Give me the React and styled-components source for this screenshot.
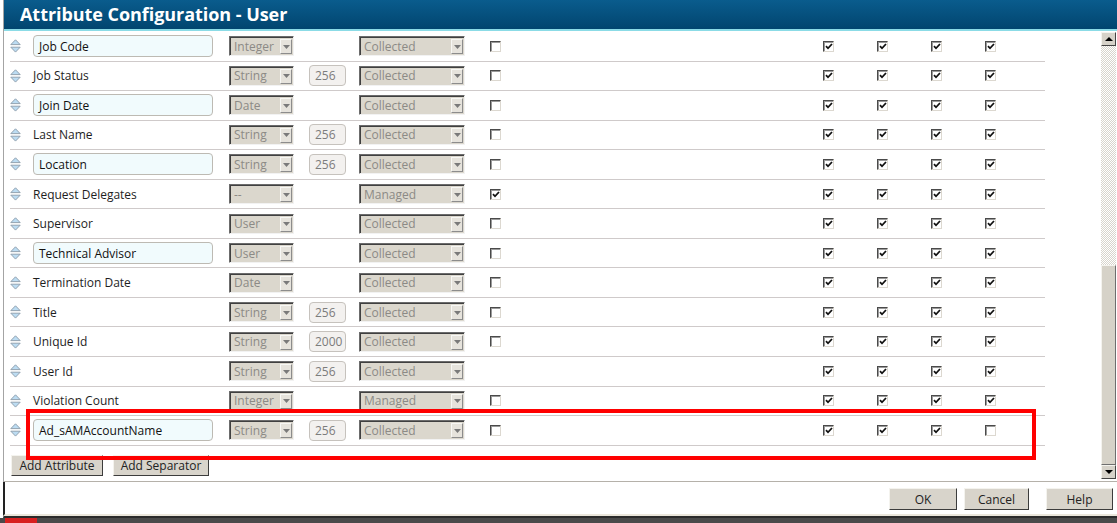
import React from "react";
import styled, { createGlobalStyle } from "styled-components";

const GlobalStyle = createGlobalStyle`
  html, body {
    margin: 0;
    padding: 0;
    background: #ffffff;
  }
  body {
    font-family: "Open Sans", "DejaVu Sans", sans-serif;
    font-size: 12px;
    color: #222;
  }
  * {
    box-sizing: border-box;
  }
`;

const rows = [
  { name: "Job Code", edit: true, type: "Integer", source: "Collected", flag: false },
  { name: "Job Status", type: "String", len: "256", source: "Collected", flag: false },
  { name: "Join Date", edit: true, type: "Date", source: "Collected", flag: false },
  { name: "Last Name", type: "String", len: "256", source: "Collected", flag: false },
  { name: "Location", edit: true, type: "String", len: "256", source: "Collected", flag: false },
  { name: "Request Delegates", type: "--", source: "Managed", flag: true },
  { name: "Supervisor", type: "User", source: "Collected", flag: false },
  { name: "Technical Advisor", edit: true, type: "User", source: "Collected", flag: false },
  { name: "Termination Date", type: "Date", source: "Collected", flag: false },
  { name: "Title", type: "String", len: "256", source: "Collected", flag: false },
  { name: "Unique Id", type: "String", len: "2000", source: "Collected", flag: false },
  { name: "User Id", type: "String", len: "256", source: "Collected", flag: null },
  { name: "Violation Count", type: "Integer", source: "Managed", flag: false },
  {
    name: "Ad_sAMAccountName",
    edit: true,
    type: "String",
    len: "256",
    source: "Collected",
    flag: false,
    perms: [true, true, true, false],
  },
];

const App = () => {
  return (
    <>
      <GlobalStyle />
      <Page>
        <Dialog>
          <TitleBar>Attribute Configuration - User</TitleBar>
          <Body>
            <ScrollPane>
              {rows.map((r) => (
                <Row key={r.name}>
                  <Cell $w={23}>
                    <SortIcon />
                  </Cell>
                  <Cell $w={196}>
                    {r.edit ? <NameInput>{r.name}</NameInput> : <NameLabel>{r.name}</NameLabel>}
                  </Cell>
                  <Cell $w={80}>
                    <Select $w={65}>{r.type}</Select>
                  </Cell>
                  <Cell $w={50}>{r.len && <LengthBox>{r.len}</LengthBox>}</Cell>
                  <Cell $w={131}>
                    <Select $w={106}>{r.source}</Select>
                  </Cell>
                  <Cell $w={333}>{r.flag !== null && <Check checked={r.flag} />}</Cell>
                  {(r.perms || [true, true, true, true]).map((p, i) => (
                    <Cell $w={54} key={i}>
                      <Check checked={p} />
                    </Cell>
                  ))}
                </Row>
              ))}
              <ActionBar>
                <Button $w={92}>Add Attribute</Button>
                <Button $w={96}>Add Separator</Button>
              </ActionBar>
            </ScrollPane>
            <Scrollbar>
              <ScrollButton>
                <Arrow $up />
              </ScrollButton>
              <Track>
                <Thumb />
              </Track>
              <ScrollButton>
                <Arrow />
              </ScrollButton>
            </Scrollbar>
          </Body>
          <Footer>
            <Button $w={68} $h={22}>OK</Button>
            <Button $w={65} $h={22}>Cancel</Button>
            <Button $w={67} $h={22} $gap={10}>Help</Button>
          </Footer>
          <Highlight />
        </Dialog>
        <Behind>
          <RedTab />
        </Behind>
      </Page>
    </>
  );
};

export default App;

const SortIcon = () => (
  <svg width="11" height="14" viewBox="0 0 11 14">
    <path d="M5.5 0.8 L10.2 5.6 L0.8 5.6 Z" fill="#bcdcf2" stroke="#8a9aa8" strokeWidth="0.9" />
    <path d="M0.8 8.2 L10.2 8.2 L5.5 13.1 Z" fill="#bcdcf2" stroke="#8a9aa8" strokeWidth="0.9" />
  </svg>
);

const Select = ({ $w, children }) => (
  <SelectBox $w={$w}>
    <SelectValue>{children}</SelectValue>
    <SelectArrow>
      <svg width="7" height="4" viewBox="0 0 7 4">
        <path d="M0 0 L7 0 L3.5 4 Z" fill="#7a7a7a" />
      </svg>
    </SelectArrow>
  </SelectBox>
);

const Check = ({ checked }) => (
  <CheckBox>
    {checked && (
      <svg width="8" height="7" viewBox="0 0 8 7">
        <path d="M1 3.2 L3 5.3 L7 1" fill="none" stroke="#111" strokeWidth="1.8" />
      </svg>
    )}
  </CheckBox>
);

const Page = styled.div`
  width: 1117px;
  height: 523px;
  overflow: hidden;
  padding-left: 3px;
  background: #ffffff;
`;

const Dialog = styled.div`
  position: relative;
  width: 1114px;
  height: 518px;
  display: flex;
  flex-direction: column;
  border-left: 1px solid #a4a4a4;
  border-bottom: 2px solid #2b2b2b;
  background: #ffffff;
`;

const TitleBar = styled.div`
  height: 31px;
  flex: none;
  padding: 0 0 1px 16px;
  display: flex;
  align-items: center;
  background: linear-gradient(#0a5c8d, #01456f);
  border-bottom: 2px solid #8bdbe6;
  color: #ffffff;
  font-weight: 700;
  font-size: 18px;
  letter-spacing: -0.05px;
`;

const Body = styled.div`
  height: 451px;
  flex: none;
  display: flex;
  border-bottom: 1px solid #b5b1aa;
`;

const ScrollPane = styled.div`
  flex: 1;
  padding: 1px 0 0 6px;
  overflow: hidden;
`;

const Row = styled.div`
  display: flex;
  align-items: center;
  width: 1035px;
  height: 29.56px;
  border-bottom: 1px solid #cfcaca;
`;

const Cell = styled.div`
  width: ${(p) => p.$w}px;
  flex: none;
  display: flex;
  align-items: center;
`;

const NameInput = styled.div`
  width: 180px;
  height: 22px;
  padding-left: 5px;
  display: flex;
  align-items: center;
  background: #f1fbfd;
  border: 1px solid #bdbab3;
  border-radius: 4px;
  color: #111;
`;

const NameLabel = styled.div`
  color: #1e1e1e;
`;

const SelectBox = styled.div`
  width: ${(p) => p.$w}px;
  height: 20px;
  display: flex;
  align-items: stretch;
  background: #dbd7cd;
  border: 1px solid;
  border-color: #6c6c6c #f2f2f2 #f2f2f2 #6c6c6c;
  box-shadow: inset 1px 1px 0 #404040;
`;

const SelectValue = styled.div`
  flex: 1;
  padding-left: 4px;
  display: flex;
  align-items: center;
  color: #8c8a86;
  overflow: hidden;
  white-space: nowrap;
`;

const SelectArrow = styled.div`
  width: 12px;
  margin: 2px 1px 1px 0;
  display: flex;
  align-items: center;
  justify-content: center;
  background: #e6e3dc;
  border: 1px solid;
  border-color: #f7f7f4 #8c8c8c #8c8c8c #f7f7f4;
`;

const LengthBox = styled.div`
  width: 37px;
  height: 21px;
  padding-left: 5px;
  display: flex;
  align-items: center;
  background: #f3f1ef;
  border: 1px solid #c6c2bd;
  border-radius: 4px;
  color: #7c7c7c;
`;

const CheckBox = styled.div`
  width: 11px;
  height: 11px;
  display: flex;
  align-items: center;
  justify-content: center;
  background: #ffffff;
  border: 1px solid;
  border-color: #4a4a4a #dcd8d0 #dcd8d0 #4a4a4a;
  box-shadow: inset 1px 1px 0 #9a9a9a;
`;

const ActionBar = styled.div`
  display: flex;
  gap: 10px;
  padding-left: 1px;
  margin-top: 9px;
`;

const Button = styled.div`
  width: ${(p) => p.$w}px;
  height: ${(p) => p.$h || 21}px;
  margin-left: ${(p) => p.$gap || 0}px;
  display: flex;
  align-items: center;
  justify-content: center;
  background: #d8d4cb;
  border: 1px solid;
  border-color: #f4f3ee #3c3c3c #3c3c3c #f4f3ee;
  color: #222;
  font-size: 12px;
`;

const Scrollbar = styled.div`
  width: 15px;
  margin-right: 1px;
  padding: 1px 0 2px;
  display: flex;
  flex-direction: column;
  flex: none;
`;

const ScrollButton = styled.div`
  height: 14px;
  flex: none;
  display: flex;
  align-items: center;
  justify-content: center;
  background: #d6d2c9;
  border: 1px solid;
  border-color: #f4f3ee #444 #444 #f4f3ee;
`;

const Arrow = styled.div`
  width: 0;
  height: 0;
  border-left: 4px solid transparent;
  border-right: 4px solid transparent;
  ${(p) => (p.$up ? "border-bottom: 4px solid #000;" : "border-top: 4px solid #000;")}
`;

const Track = styled.div`
  flex: 1;
  display: flex;
  flex-direction: column;
  padding-top: 219px;
  background-color: #f2f1ec;
  background-image: repeating-conic-gradient(#ffffff 0 25%, #d8d5cc 0 50%);
  background-size: 2px 2px;
`;

const Thumb = styled.div`
  flex: 1;
  background: #d6d2c8;
  border: 1px solid;
  border-color: #f4f3ee #6e6e6e #6e6e6e #f4f3ee;
`;

const Footer = styled.div`
  flex: 1;
  display: flex;
  align-items: flex-start;
  justify-content: flex-end;
  gap: 7px;
  padding: 6px 4px 0 0;
  background: #ffffff;
  border-bottom: 2px solid #ebe7dc;
  border-left: 2px solid #222;
  margin-left: -1px;
`;

const Highlight = styled.div`
  position: absolute;
  left: 22px;
  top: 409px;
  width: 1010px;
  height: 51px;
  border: 4px solid #ff0000;
  pointer-events: none;
`;

const Behind = styled.div`
  height: 5px;
  margin-left: -3px;
  display: flex;
  background: #4a4a4a;
`;

const RedTab = styled.div`
  width: 32px;
  margin-left: 5px;
  background: #d82020;
`;
